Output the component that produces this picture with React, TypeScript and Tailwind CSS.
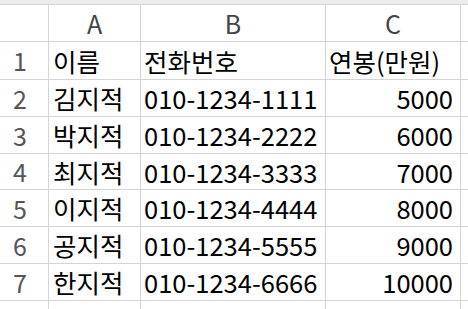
import React from "react";

const rows = [
  ["이름", "전화번호", "연봉(만원)"],
  ["김지적", "010-1234-1111", "5000"],
  ["박지적", "010-1234-2222", "6000"],
  ["최지적", "010-1234-3333", "7000"],
  ["이지적", "010-1234-4444", "8000"],
  ["공지적", "010-1234-5555", "9000"],
  ["한지적", "010-1234-6666", "10000"],
];

const heights = ["h-[37px]", "h-[36px]", "h-[36px]", "h-[35px]", "h-[36px]", "h-[36px]", "h-[36px]"];

export default function App() {
  return (
    <div
      className="w-[468px] h-[309px] overflow-hidden bg-[#d4d4d4] text-[25.5px] leading-none"
      style={{ fontFamily: '"Noto Sans CJK KR", "Noto Sans", sans-serif' }}
    >
      <div className="h-[4px] bg-[#ececec]" />
      <div className="grid grid-cols-[48px_91px_184px_134px_1fr] gap-x-px gap-y-px pt-px">
        <div className="h-[36px] bg-white" />
        {["A", "B", "C"].map((c) => (
          <div key={c} className="h-[36px] bg-white flex items-center justify-center text-[#444] text-[25px]">
            {c}
          </div>
        ))}
        <div className="h-[36px] bg-white" />
        {rows.map((r, i) => (
          <React.Fragment key={i}>
            <div className={`${heights[i]} bg-white flex items-center justify-center pr-[8px] text-[#555] text-[25px]`}>
              {i + 1}
            </div>
            <div className={`${heights[i]} bg-white flex items-center pl-[4px] text-black`}>{r[0]}</div>
            <div className={`${heights[i]} bg-white flex items-center pl-[3px] text-black`}>{r[1]}</div>
            <div
              className={`${heights[i]} bg-white flex items-center ${
                i === 0 ? "justify-start pl-[3px]" : "justify-end pr-[7px]"
              } text-black`}
            >
              {r[2]}
            </div>
            <div className={`${heights[i]} bg-white`} />
          </React.Fragment>
        ))}
        <div className="h-[36px] bg-white flex items-start justify-center pr-[8px] pt-[5px] text-[#555] text-[25px]">8</div>
        <div className="h-[36px] bg-white" />
        <div className="h-[36px] bg-white" />
        <div className="h-[36px] bg-white" />
        <div className="h-[36px] bg-white" />
      </div>
    </div>
  );
}
